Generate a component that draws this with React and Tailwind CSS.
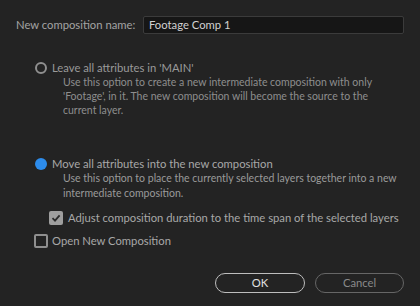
export default function App() {
  return (
    <div
      className="w-[420px] h-[306px] bg-[#232323] text-[11.25px] leading-[14px] text-[#a3a3a3] overflow-hidden whitespace-nowrap"
      style={{ fontFamily: 'Lato, "Noto Sans", sans-serif' }}
    >
      {/* name row */}
      <div className="flex items-center pt-[16px] pl-[16px]">
        <span className="w-[127px] shrink-0">New composition name:</span>
        <div className="w-[261px] h-[18px] shrink-0 bg-[#161616] border border-[#3b3b3b] rounded-[2px] flex items-center pl-[5px] text-[#d2d2d2]">
          Footage Comp 1
        </div>
      </div>

      {/* option 1 */}
      <div className="mt-[27px] pl-[35px]">
        <div className="flex items-center gap-[5px] h-[14px]">
          <span className="w-[12px] h-[12px] shrink-0 rounded-full border-2 border-[#8f8f8f] box-border" />
          <span className="text-[#9a9a9a]">Leave all attributes in 'MAIN'</span>
        </div>
        <p className="pl-[28px] text-[#8e8e8e] text-[10.5px]">
          Use this option to create a new intermediate composition with only
          <br />
          'Footage', in it. The new composition will become the source to the
          <br />
          current layer.
        </p>
      </div>

      {/* option 2 */}
      <div className="mt-[40px] pl-[35px]">
        <div className="flex items-center gap-[5px] h-[14px]">
          <span className="w-[12px] h-[12px] shrink-0 rounded-full bg-[#2d8ceb]" />
          <span className="text-[#a8a8a8]">Move all attributes into the new composition</span>
        </div>
        <p className="pl-[28px] text-[#9a9a9a] text-[10.5px] leading-[14.5px]">
          Use this option to place the currently selected layers together into a new
          <br />
          intermediate composition.
        </p>
      </div>

      {/* adjust checkbox */}
      <div className="mt-[11px] pl-[49px] flex items-center gap-[5px] h-[14px]">
        <span className="w-[14px] h-[14px] shrink-0 rounded-[2px] bg-[#9e9e9e] flex items-center justify-center">
          <svg width="10" height="10" viewBox="0 0 10 10">
            <path d="M1.5 5.2 L4 7.6 L8.6 2.4" fill="none" stroke="#2a2a2a" strokeWidth="1.8" />
          </svg>
        </span>
        <span className="text-[#a8a8a8]">Adjust composition duration to the time span of the selected layers</span>
      </div>

      {/* open new */}
      <div className="mt-[9px] pl-[34px] flex items-center gap-[4px] h-[14px]">
        <span className="w-[14px] h-[14px] shrink-0 rounded-[2px] border-2 border-[#8f8f8f] box-border" />
        <span className="text-[#a8a8a8]">Open New Composition</span>
      </div>

      {/* buttons */}
      <div className="mt-[25px] flex justify-end gap-[10px] pr-[16px]">
        <button className="w-[90px] h-[20px] rounded-full border-[1.5px] border-[#bdbdbd] text-[#e0e0e0] flex items-center justify-center">
          OK
        </button>
        <button className="w-[89px] h-[20px] rounded-full border-[1.5px] border-[#666666] text-[#8a8a8a] flex items-center justify-center">
          Cancel
        </button>
      </div>
    </div>
  )
}
